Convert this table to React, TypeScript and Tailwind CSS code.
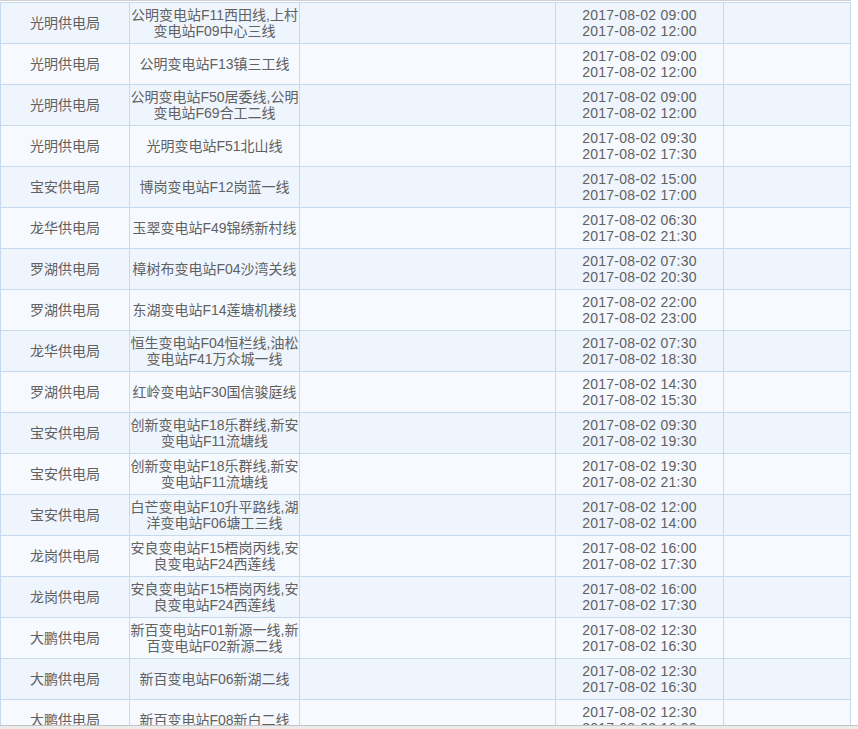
import React from 'react'

type Row = { bureau: string; line: string; start: string; end: string }

const rows: Row[] = [
  { bureau: '光明供电局', line: '公明变电站F11西田线,上村变电站F09中心三线', start: '2017-08-02 09:00', end: '2017-08-02 12:00' },
  { bureau: '光明供电局', line: '公明变电站F13镇三工线', start: '2017-08-02 09:00', end: '2017-08-02 12:00' },
  { bureau: '光明供电局', line: '公明变电站F50居委线,公明变电站F69合工二线', start: '2017-08-02 09:00', end: '2017-08-02 12:00' },
  { bureau: '光明供电局', line: '光明变电站F51北山线', start: '2017-08-02 09:30', end: '2017-08-02 17:30' },
  { bureau: '宝安供电局', line: '博岗变电站F12岗蓝一线', start: '2017-08-02 15:00', end: '2017-08-02 17:00' },
  { bureau: '龙华供电局', line: '玉翠变电站F49锦绣新村线', start: '2017-08-02 06:30', end: '2017-08-02 21:30' },
  { bureau: '罗湖供电局', line: '樟树布变电站F04沙湾关线', start: '2017-08-02 07:30', end: '2017-08-02 20:30' },
  { bureau: '罗湖供电局', line: '东湖变电站F14莲塘机楼线', start: '2017-08-02 22:00', end: '2017-08-02 23:00' },
  { bureau: '龙华供电局', line: '恒生变电站F04恒栏线,油松变电站F41万众城一线', start: '2017-08-02 07:30', end: '2017-08-02 18:30' },
  { bureau: '罗湖供电局', line: '红岭变电站F30国信骏庭线', start: '2017-08-02 14:30', end: '2017-08-02 15:30' },
  { bureau: '宝安供电局', line: '创新变电站F18乐群线,新安变电站F11流塘线', start: '2017-08-02 09:30', end: '2017-08-02 19:30' },
  { bureau: '宝安供电局', line: '创新变电站F18乐群线,新安变电站F11流塘线', start: '2017-08-02 19:30', end: '2017-08-02 21:30' },
  { bureau: '宝安供电局', line: '白芒变电站F10升平路线,湖洋变电站F06塘工三线', start: '2017-08-02 12:00', end: '2017-08-02 14:00' },
  { bureau: '龙岗供电局', line: '安良变电站F15梧岗丙线,安良变电站F24西莲线', start: '2017-08-02 16:00', end: '2017-08-02 17:30' },
  { bureau: '龙岗供电局', line: '安良变电站F15梧岗丙线,安良变电站F24西莲线', start: '2017-08-02 16:00', end: '2017-08-02 17:30' },
  { bureau: '大鹏供电局', line: '新百变电站F01新源一线,新百变电站F02新源二线', start: '2017-08-02 12:30', end: '2017-08-02 16:30' },
  { bureau: '大鹏供电局', line: '新百变电站F06新湖二线', start: '2017-08-02 12:30', end: '2017-08-02 16:30' },
  { bureau: '大鹏供电局', line: '新百变电站F08新白二线', start: '2017-08-02 12:30', end: '2017-08-02 16:00' },
]

export default function App() {
  return (
    <div
      className="w-[858px] h-[729px] bg-white flex flex-col overflow-hidden text-[14px] leading-[16px] text-[#616161]"
      style={{ fontFamily: '"Liberation Sans", "Noto Sans CJK SC", sans-serif' }}
    >
      {/* scrolled table body */}
      <div className="h-[725px] overflow-hidden">
        <div className="w-[851px] border-t border-[#cfcfcf] pt-px">
          <div className="border-t border-l border-[#c6d9ee]">
            {rows.map((r, i) => (
              <div
                key={i}
                className={
                  'flex h-[41px] border-b border-[#c6d9ee] ' +
                  (i % 2 === 0 ? 'bg-[#eff5fd]' : 'bg-[#f6f9fe]')
                }
              >
                <div className="w-[129px] shrink-0 border-r border-[#c6d9ee] flex items-center justify-center text-center">
                  {r.bureau}
                </div>
                <div className="w-[170px] shrink-0 border-r border-[#c6d9ee] flex items-center justify-center text-center">
                  {r.line}
                </div>
                <div className="w-[256px] shrink-0 border-r border-[#c6d9ee]" />
                <div className="w-[168px] shrink-0 border-r border-[#c6d9ee] flex flex-col items-center justify-center tracking-[0.25px]">
                  <span>{r.start}</span>
                  <span>{r.end}</span>
                </div>
                <div className="w-[127px] shrink-0 border-r border-[#c6d9ee]" />
              </div>
            ))}
          </div>
        </div>
      </div>
      {/* horizontal scrollbar edge */}
      <div className="h-[4px] border-t border-[#c4c4c4] bg-[#ebebeb]" />
    </div>
  )
}
